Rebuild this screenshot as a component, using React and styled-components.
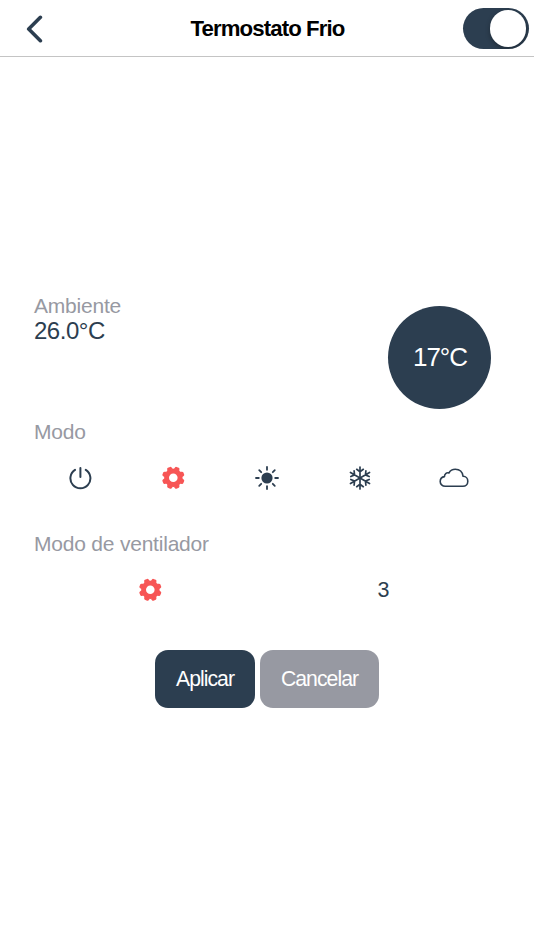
import { useState } from 'react'
import styled, { createGlobalStyle } from 'styled-components'

const GlobalStyle = createGlobalStyle`
  body {
    margin: 0;
    background: #fff;
    color: #2c3e50;
    font-family: 'Liberation Sans', Arial, sans-serif;
  }
  * {
    box-sizing: border-box;
  }
  button {
    border: 0;
    padding: 0;
    background: none;
    color: inherit;
    font: inherit;
    cursor: pointer;
  }
`

const Page = styled.div`
  display: flex;
  flex-direction: column;
  height: 950px;
  overflow: hidden;
`

const Navbar = styled.header`
  display: grid;
  grid-template-columns: 94px 1fr 94px;
  align-items: center;
  flex: none;
  height: 57px;
  border-bottom: 1px solid #c4c4c4;
`

const BackButton = styled.button`
  justify-self: start;
  height: 28px;
  margin: 2px 0 0 26px;
  svg {
    display: block;
  }
`

const Title = styled.h1`
  margin: 0;
  padding: 2px 0 0 1px;
  color: #000;
  font-size: 22.2px;
  line-height: 26px;
  letter-spacing: -0.04em;
  text-align: center;
  white-space: nowrap;
`

const Toggle = styled.button`
  justify-self: end;
  display: flex;
  align-items: center;
  justify-content: ${({ $on }) => ($on ? 'flex-end' : 'flex-start')};
  width: 66px;
  height: 41px;
  margin: 1px 5px 0 0;
  padding: 2px 2.6px;
  border-radius: 21px;
  background: ${({ $on }) => ($on ? '#2c3e50' : '#e5e5e5')};
  overflow: hidden;
`

const Knob = styled.span`
  width: 36.4px;
  height: 36.4px;
  border-radius: 50%;
  background: #fff;
  box-shadow: 0 2px 5px rgba(0, 0, 0, 0.3);
`

const Content = styled.main`
  display: flex;
  flex-direction: column;
  padding: 236px 34px 0;
`

const Summary = styled.section`
  display: flex;
  justify-content: space-between;
  height: 126px;
`

const Label = styled.div`
  color: #9799a2;
  font-size: 21px;
  line-height: 25px;
  letter-spacing: -0.01em;
`

const Ambient = styled.div`
  font-size: 24px;
  line-height: 26px;
  letter-spacing: -0.02em;
`

const Setpoint = styled.div`
  display: flex;
  align-items: center;
  justify-content: center;
  width: 103px;
  height: 103px;
  margin: 12.5px 9px 0 0;
  padding-left: 1px;
  border-radius: 50%;
  background: #2c3e50;
  color: #fff;
  font-size: 26px;
  letter-spacing: -0.04em;
`

const Options = styled.div`
  display: flex;
  height: ${({ $height }) => $height}px;
  padding-top: 18px;
`

const Option = styled.button`
  display: flex;
  flex: 1;
  align-items: center;
  justify-content: center;
  height: 32px;
  color: ${({ $active }) => ($active ? '#f75555' : '#2c3e50')};
  font-size: 21.5px;
`

const Actions = styled.div`
  display: flex;
  justify-content: center;
  gap: 5px;
`

const ActionButton = styled.button`
  width: ${({ $width }) => $width}px;
  height: 58px;
  border-radius: 13px;
  background: ${({ $muted }) => ($muted ? '#9799a2' : '#2c3e50')};
  color: #fff;
  font-size: 21.2px;
  letter-spacing: -0.045em;
`

const BackIcon = () => (
  <svg width="17" height="28" viewBox="0 0 17 28" fill="none" stroke="#2c3e50" strokeWidth="3.6" strokeLinecap="round" strokeLinejoin="round">
    <path d="M14.4 2.3 2.7 14l11.7 11.7" />
  </svg>
)

const PowerIcon = () => (
  <svg width="24" height="24" viewBox="-11.4 -12 24 24" fill="none" stroke="currentColor" strokeWidth="2" strokeLinecap="round">
    <path d="M0-10V-1M-5.4-8.1A10 10 0 1 0 5.4-8.1" />
  </svg>
)

const GearIcon = () => (
  <svg width="24" height="24" viewBox="-11.3 -11.8 24 24" fill="currentColor">
    <circle r="6.7" fill="none" stroke="currentColor" strokeWidth="4.8" />
    {[22.5, 67.5, 112.5, 157.5, 202.5, 247.5, 292.5, 337.5].map((angle) => (
      <path key={angle} transform={`rotate(${angle})`} d="M-3.4-8.2Q-2.6-8.8-2.4-10.2Q-2.2-11.2-1.2-11.3H1.2Q2.2-11.2 2.4-10.2Q2.6-8.8 3.4-8.2Z" />
    ))}
  </svg>
)

const SunIcon = () => (
  <svg width="24" height="24" viewBox="-12 -12 24 24" fill="currentColor" stroke="currentColor">
    <circle r="5.6" stroke="none" />
    {[0, 45, 90, 135, 180, 225, 270, 315].map((angle) => (
      <path key={angle} transform={`rotate(${angle})`} d="M0-8.2V-11" strokeWidth="1.8" strokeLinecap="round" />
    ))}
  </svg>
)

const SnowIcon = () => (
  <svg width="24" height="24" viewBox="-12 -12 24 24" fill="none" stroke="currentColor" strokeWidth="1.7" strokeLinecap="round" strokeLinejoin="round">
    {[0, 60, 120, 180, 240, 300].map((angle) => (
      <path key={angle} transform={`rotate(${angle})`} d="M0 0V-11M-3.3-8.7 0-6.3 3.3-8.7" />
    ))}
  </svg>
)

const CloudIcon = () => (
  <svg width="30" height="24" viewBox="-1 0 30 24" fill="none" stroke="currentColor" strokeWidth="1.6" strokeLinejoin="round" overflow="visible">
    <path d="M6.3 20.3C3.3 20.3 1.2 18.1 1.2 15.4C1.2 12.7 3.2 10.9 5.5 10.6C5.3 8 7.5 6.2 9.9 7C11.2 4.7 13.6 3.3 16.3 3.3C20.6 3.3 23.5 6.3 24.1 10.3C26.9 10.4 28.8 12.6 28.8 15.2C28.8 18.1 26.7 20.3 23.9 20.3Z" />
  </svg>
)

const modes = [
  { id: 'off', Icon: PowerIcon },
  { id: 'auto', Icon: GearIcon },
  { id: 'heat', Icon: SunIcon },
  { id: 'cool', Icon: SnowIcon },
  { id: 'fan', Icon: CloudIcon },
]

export default function App() {
  const [on, setOn] = useState(true)
  const [mode, setMode] = useState('auto')
  const [fan, setFan] = useState('auto')

  return (
    <Page>
      <GlobalStyle />
      <Navbar>
        <BackButton>
          <BackIcon />
        </BackButton>
        <Title>Termostato Frio</Title>
        <Toggle $on={on} onClick={() => setOn(!on)}>
          <Knob />
        </Toggle>
      </Navbar>
      <Content>
        <Summary>
          <div>
            <Label>Ambiente</Label>
            <Ambient>26.0°C</Ambient>
          </div>
          <Setpoint>17°C</Setpoint>
        </Summary>
        <Label>Modo</Label>
        <Options $height={87}>
          {modes.map(({ id, Icon }) => (
            <Option key={id} $active={mode === id} onClick={() => setMode(id)}>
              <Icon />
            </Option>
          ))}
        </Options>
        <Label>Modo de ventilador</Label>
        <Options $height={93.5}>
          <Option $active={fan === 'auto'} onClick={() => setFan('auto')}>
            <GearIcon />
          </Option>
          <Option $active={fan === '3'} onClick={() => setFan('3')}>
            3
          </Option>
        </Options>
        <Actions>
          <ActionButton $width={100}>Aplicar</ActionButton>
          <ActionButton $width={119} $muted>
            Cancelar
          </ActionButton>
        </Actions>
      </Content>
    </Page>
  )
}
